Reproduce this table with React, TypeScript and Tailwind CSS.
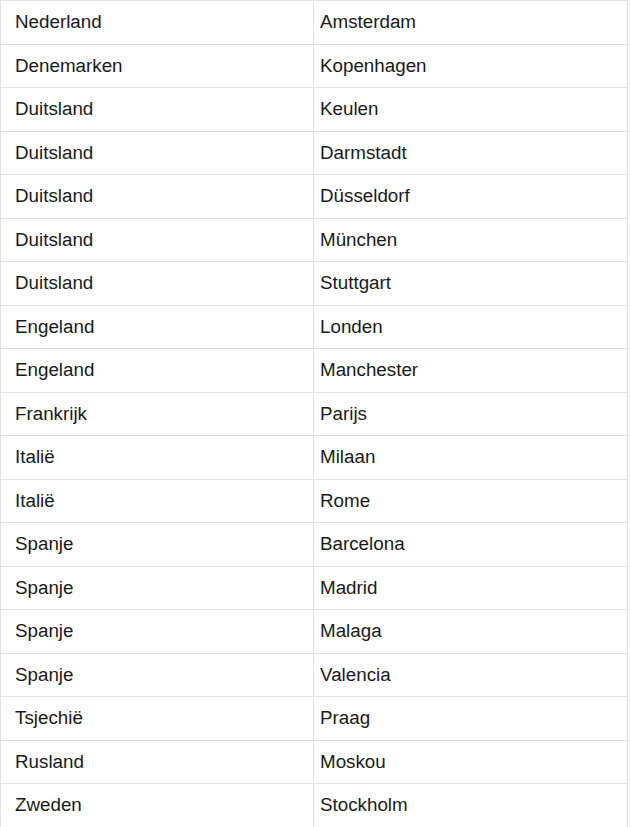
const rows: [string, string][] = [
  ["Nederland", "Amsterdam"],
  ["Denemarken", "Kopenhagen"],
  ["Duitsland", "Keulen"],
  ["Duitsland", "Darmstadt"],
  ["Duitsland", "Düsseldorf"],
  ["Duitsland", "München"],
  ["Duitsland", "Stuttgart"],
  ["Engeland", "Londen"],
  ["Engeland", "Manchester"],
  ["Frankrijk", "Parijs"],
  ["Italië", "Milaan"],
  ["Italië", "Rome"],
  ["Spanje", "Barcelona"],
  ["Spanje", "Madrid"],
  ["Spanje", "Malaga"],
  ["Spanje", "Valencia"],
  ["Tsjechië", "Praag"],
  ["Rusland", "Moskou"],
  ["Zweden", "Stockholm"],
];

export default function App() {
  return (
    <div className="bg-white min-h-[827px] w-[630px]">
      <div
        className="w-[628px] border-l border-t border-[#e0e0e0] text-[18.8px] text-[#1a1a1a]"
        style={{ fontFamily: '"Liberation Sans", Arial, sans-serif' }}
      >
        {rows.map(([a, b], i) => (
          <div key={i} className="flex h-[43.5px]">
            <div className="w-[313px] flex items-center pl-[14px] border-r border-b border-[#e0e0e0]">
              {a}
            </div>
            <div className="w-[314px] flex items-center pl-[6px] border-r border-b border-[#e0e0e0]">
              {b}
            </div>
          </div>
        ))}
      </div>
    </div>
  );
}
